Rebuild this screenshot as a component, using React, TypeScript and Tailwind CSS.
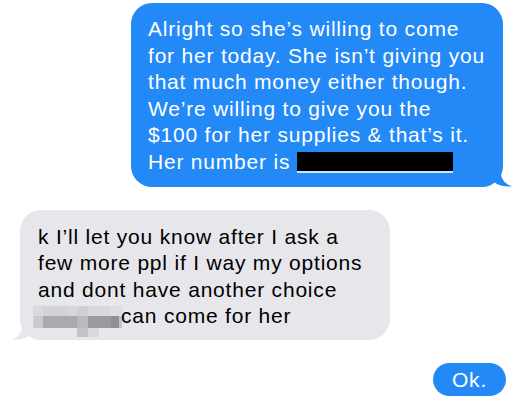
const font = { fontFamily: "'Liberation Sans', Arial, sans-serif" };

function TailRight({ color }: { color: string }) {
  return (
    <svg className="absolute bottom-0 right-[-10px]" width="22" height="22" viewBox="0 0 22 22">
      <path d="M0 0 H10 V8 C10 14 14 19 21 21.5 C14 22 8 21 3 17 Z" fill={color} />
    </svg>
  );
}

function TailLeft({ color }: { color: string }) {
  return (
    <svg className="absolute bottom-0 left-[-8px]" width="22" height="22" viewBox="0 0 22 22">
      <path d="M22 0 H10 V8 C10 14 7 19 0 21.5 C7 22 13 21 18 17 Z" fill={color} />
    </svg>
  );
}

function Pixelated() {
  const tiles: [number, number, number, number, string][] = [
    [0, 0, 10, 10, "#d9d9de"],
    [10, 0, 24, 10, "#d2d2d8"],
    [34, 0, 10, 10, "#d6d6db"],
    [44, 0, 11, 10, "#cfcfd5"],
    [55, 0, 22, 10, "#d8d8dd"],
    [77, 0, 12, 10, "#dcdce1"],
    [0, 10, 10, 12, "#c9c9ce"],
    [10, 10, 34, 12, "#a9a9ae"],
    [44, 10, 11, 12, "#b9b9be"],
    [55, 10, 23, 12, "#9a9a9f"],
    [78, 10, 8, 12, "#8e8e93"],
    [86, 10, 3, 12, "#c3c3c8"],
    [44, 22, 11, 9, "#c3c3c8"],
    [55, 22, 11, 9, "#d9d9dd"],
  ];
  return (
    <svg className="inline-block align-[-5px] overflow-visible" width="88" height="22">
      {tiles.map(([x, y, w, h, c], i) => (
        <rect key={i} x={x} y={y} width={w} height={h} fill={c} />
      ))}
    </svg>
  );
}

export default function App() {
  return (
    <div className="w-[517px] h-[406px] bg-white flex flex-col overflow-hidden" style={font}>
      <div className="relative self-end mr-[14px] mt-[3px] w-[372px] rounded-[21px] bg-[#2389f7] pl-[17px] pt-[13px] pb-[11px] text-[21px] leading-[26.6px] tracking-[0.8px] text-white whitespace-nowrap">
        <div>Alright so she’s willing to come</div>
        <div>for her today. She isn’t giving you</div>
        <div>that much money either though.</div>
        <div>We’re willing to give you the</div>
        <div>$100 for her supplies &amp; that’s it.</div>
        <div className="flex items-center">
          <span>Her number is</span>
          <span className="ml-[7px] inline-block h-[21px] w-[156px] border-b-2 border-[#cfe3fb] bg-black" />
        </div>
        <TailRight color="#2389f7" />
      </div>

      <div className="relative self-start ml-[20px] mt-[23px] w-[370px] rounded-[21px] bg-[#e6e6eb] pl-[18px] pt-[14px] pb-[10px] text-[21px] leading-[26.6px] tracking-[0.8px] text-black whitespace-nowrap">
        <div>k I’ll let you know after I ask a</div>
        <div>few more ppl if I way my options</div>
        <div>and dont have another choice</div>
        <div className="ml-[-5px]">
          <Pixelated />
          can come for her
        </div>
        <TailLeft color="#e6e6eb" />
      </div>

      <div className="self-end mr-[11px] mt-[23px] flex h-[33px] w-[73px] items-center justify-center rounded-full bg-[#2389f7] text-[21px] tracking-[0.8px] text-white">
        Ok.
      </div>
    </div>
  );
}
